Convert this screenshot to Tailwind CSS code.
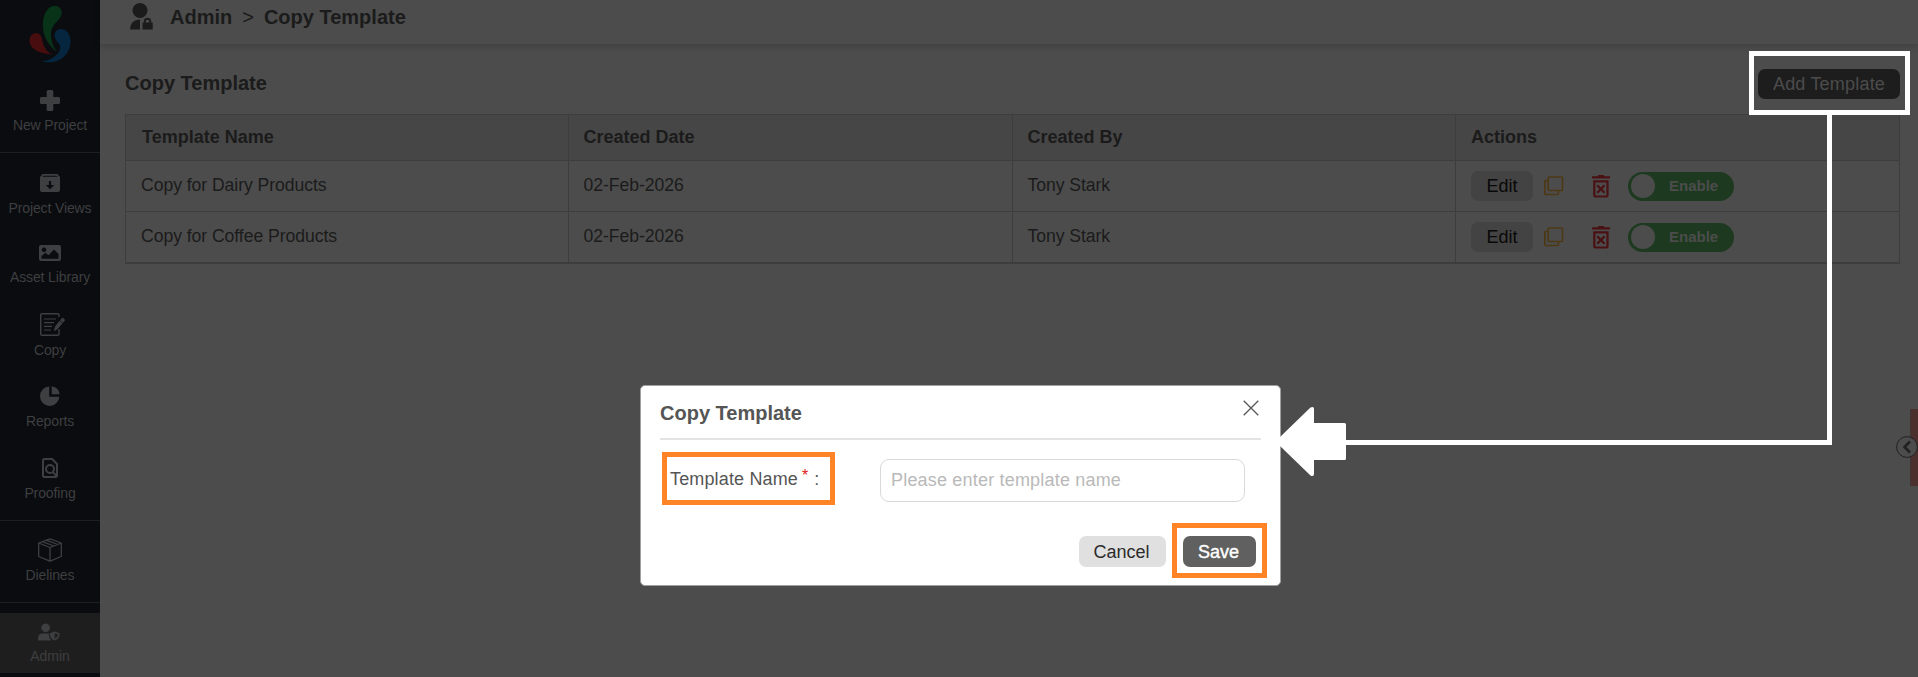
<!DOCTYPE html>
<html lang="en">
<head>
<meta charset="utf-8">
<title>Copy Template</title>
<script src="https://cdn.jsdelivr.net/npm/@tailwindcss/browser@4"></script>
</head>
<body class="relative flex h-[677px] w-[1918px] overflow-hidden bg-[#4c4c4c] font-['Liberation_Sans',Arial,sans-serif] text-[#1b1b1b]">
<svg class="hidden">
  <symbol id="copy" viewBox="0 0 20 20"><path d="M5.2 1h12.3q1 0 1 1v11.500q0 1-1 1H5.200q-1 0-1-1V2q0-1 1-1zM4 4.500H1.500q-.7 0-.7.7V17.500q0 1 1 1H13.500q1 0 1-1V15" fill="none" stroke="#4d3814" stroke-width="1.600"/></symbol>
  <symbol id="trash" viewBox="0 0 18 23"><path d="M0 1.200h5.500L6.500 0h5l1 1.200H18v2.300H0zM1.200 5.200h15.400v15.300q0 2-2 2H3.200q-2 0-2-2zm2.200 2.200v13h11v-13z" fill="#4a1012" fill-rule="evenodd"/><path d="M5.300 10.200l7.200 7.600M12.500 10.200l-7.200 7.600" stroke="#4a1012" stroke-width="2.200"/></symbol>
</svg>

<nav class="flex w-[100px] shrink-0 flex-col bg-[#0a0c0f] text-center text-sm leading-4 tracking-[-0.12px] text-[#3e3f40]">
  <div class="flex h-[153px] shrink-0 flex-col items-center border-b border-[#1d1f21]">
    <svg class="mt-[5px] h-[59px] w-[42px]" viewBox="29.500 5 42 59">
      <path d="M57.500 52C49 45.500 43.300 36 43.300 25C43.300 13 49 5.700 55.500 5.700C60 5.700 62.800 9.500 62.200 14C61 20.500 52 23.500 51.500 33C51.300 41 54 47 57.500 52Z" fill="#083318"/>
      <path d="M53 54.500C41 54 30 49.500 30 40.500C30 36 33 33 36.500 33C41 33 42.200 37 43 41C44.300 47 47.500 52.500 53 54.500Z" fill="#470d0f"/>
      <path d="M42.300 61.700C51 60.500 59 55.500 60.800 48.500C61.500 43.500 55 41 55 35.500C55 31.500 58 29 61.500 29C67 29 71 34 71 41C71 55 60 65 42.300 61.700Z" fill="#06263f"/>
    </svg>
    <svg class="mt-[26px] h-[21px] w-5 shrink-0" viewBox="0 0 21 21" preserveAspectRatio="none" fill="#3e3f40"><path d="M7 1.500Q7 0 8.500 0h4Q14 0 14 1.500V7h5.500Q21 7 21 8.500v4q0 1.500-1.500 1.500H14v5.500q0 1.500-1.500 1.500h-4Q7 21 7 19.500V14H1.500Q0 14 0 12.500v-4Q0 7 1.500 7H7z"/></svg>
    <span class="mt-[6px]">New Project</span>
  </div>
  <div class="flex h-[83px] shrink-0 flex-col items-center">
    <svg class="mt-[21px] h-[18px] w-5" viewBox="0 0 20 18"><path d="M2.500 0h15L20 3v13q0 2-2 2H2q-2 0-2-2V3zM2.300 2.800h15.400L16.500 1.700h-13zM8.900 7v4H5.800L10 15.200 14.200 11H11.100V7z" fill="#3e3f40" fill-rule="evenodd"/></svg>
    <span class="mt-[8px]">Project Views</span>
  </div>
  <div class="flex h-[70px] shrink-0 flex-col items-center">
    <svg class="mt-[9px] h-4 w-[22px]" viewBox="0 0 22 16"><path d="M2 0h18q2 0 2 2v12q0 2-2 2H2q-2 0-2-2V2q0-2 2-2zM5 2.500a2.300 2.300 0 1 0 .01 0zM2.500 13.700h17V9L15 4.500 9.500 10.200 6.500 7.700 2.500 11z" fill="#3e3f40" fill-rule="evenodd"/></svg>
    <span class="mt-[8px]">Asset Library</span>
  </div>
  <div class="flex h-[73px] shrink-0 flex-col items-center">
    <svg class="ml-[5px] mt-[7px] h-[23px] w-[25px]" viewBox="0 0 25 23" fill="none" stroke="#3e3f40"><path d="M19 4V2q0-1.300-1.300-1.300H2Q.7.700.7 2v19q0 1.300 1.300 1.300h15.700q1.300 0 1.300-1.300v-5" stroke-width="1.400"/><path d="M4 6h12M4 9.700h10M4 13.300h8M4 17h7" stroke-width="1.200"/><path d="M14.500 17.500l1-4 7-8.500 2.200 1.900-7 8.500z" stroke-width="1" fill="#3e3f40"/><path d="M19.700 7.400l2.800 2.400" stroke="#0a0c0f" stroke-width=".8"/></svg>
    <span class="mt-[6px]">Copy</span>
  </div>
  <div class="flex h-[72px] shrink-0 flex-col items-center">
    <svg class="mt-[7px] h-5 w-5" viewBox="0 0 20 20" fill="#3e3f40"><path d="M9.200.5v10.300h10.200A9.700 9.700 0 1 1 9.200.5zM11.700.2q7 1 8 8h-8z"/></svg>
    <span class="mt-[7px]">Reports</span>
  </div>
  <div class="flex h-[70px] shrink-0 flex-col items-center border-b border-[#1d1f21]">
    <svg class="mt-[7px] h-5 w-4" viewBox="0 0 16 20" fill="none" stroke="#3e3f40" stroke-width="2"><path d="M2.200 1h8l4.800 5v11.800q0 1.200-1.200 1.200H2.200Q1 19 1 17.800V2.200Q1 1 2.200 1z"/><circle cx="8" cy="11" r="4"/><path d="M10.800 14l3.700 4"/></svg>
    <span class="mt-[7px]">Proofing</span>
  </div>
  <div class="flex h-[82px] shrink-0 flex-col items-center border-b border-[#1d1f21]">
    <svg class="mt-[17px] h-6 w-6" viewBox="0 0 24 24" fill="none" stroke="#3e3f40" stroke-width="1.300" stroke-linejoin="round"><path d="M12 .8L23.300 5v13.500L12 23.200.7 18.500V5zM.7 5L12 9.500 23.300 5M12 9.500v13.700M4.300 3.600L16 8M8 2.200L19.800 6.500"/></svg>
    <span class="mt-[5px]">Dielines</span>
  </div>
  <div class="mt-[10px] flex h-[60px] shrink-0 flex-col items-center bg-[#1e1e1e]">
    <svg class="ml-[-2px] mt-[10px] h-[18px] w-[22px]" viewBox="0 0 23 18" fill="#3e3f40"><circle cx="8" cy="4.500" r="4.500"/><path d="M0 18v-2.500Q0 10.500 5 10.500h6.500q-.5 4.500 2.500 7.500zM17.500 8.500l5 1.700q.7 5.300-5 7.800-5.700-2.500-5-7.800zm0 1.800v5.800q3.600-2 3.400-4.800z" fill-rule="evenodd"/></svg>
    <span class="mt-[7px] tracking-normal">Admin</span>
  </div>
</nav>

<div class="flex grow flex-col">
  <header class="flex h-[44px] shrink-0 items-start shadow-[0_2px_7px_rgba(0,0,0,0.18)]">
    <svg class="ml-[30px] mt-[3px] h-[27px] w-[23px]" viewBox="0 0 23 27" fill="#1b1b1b"><circle cx="10" cy="7.500" r="7.500"/><path d="M0 26.500Q0 17 10 16.500V26.500zM12.500 19.500h1.300v-.7q0-4 3.700-4t3.700 4v.7h1.500v7H12.500zm3.200 0h3.600v-.7q0-2-1.800-2t-1.800 2z" fill-rule="evenodd"/></svg>
    <div class="ml-[17px] mt-[5px] flex text-xl leading-6 font-bold"><span>Admin</span><span class="ml-[10px] font-normal">&gt;</span><span class="ml-[10px]">Copy Template</span></div>
  </header>
  <main class="mr-[18px] ml-[25px]">
    <div class="flex h-[70px] justify-between">
      <h1 class="mt-[27px] text-xl leading-6 font-bold">Copy Template</h1>
      <button class="mt-[25px] h-[30px] w-[142px] rounded-[7px] bg-[#1d1d1d] text-lg leading-[29px] tracking-[0.2px] text-[#4c4c4c]">Add Template</button>
    </div>
    <table class="w-full table-fixed border-separate border-spacing-0 border-t border-l border-b border-[#3d3d3d] text-left text-[17.600px] tracking-[-0.050px]">
      <colgroup><col class="w-[443px]"><col class="w-[444px]"><col class="w-[443px]"><col class="w-[444px]"></colgroup>
      <thead class="bg-[#464646] text-lg tracking-normal">
        <tr class="h-[46px]">
          <th class="border-r border-b border-[#3d3d3d] p-0 pb-[2px] pl-4">Template Name</th>
          <th class="border-r border-b border-[#3d3d3d] p-0 pb-[2px] pl-[14.500px]">Created Date</th>
          <th class="border-r border-b border-[#3d3d3d] p-0 pb-[2px] pl-[14.500px]">Created By</th>
          <th class="border-r border-b border-[#3d3d3d] p-0 pb-[2px] pl-[15px]">Actions</th>
        </tr>
      </thead>
      <tbody>
        <tr class="h-[51px]">
          <td class="border-r border-b border-[#3d3d3d] p-0 pb-[2px] pl-[15px]">Copy for Dairy Products</td>
          <td class="border-r border-b border-[#3d3d3d] p-0 pb-[2px] pl-[14.500px]">02-Feb-2026</td>
          <td class="border-r border-b border-[#3d3d3d] p-0 pb-[2px] pl-[14.500px]">Tony Stark</td>
          <td class="border-r border-b border-[#3d3d3d] p-0 pl-[15px]">
            <div class="flex items-center tracking-normal">
              <button class="h-[30px] w-[62px] rounded-[7px] bg-[#434343] text-lg leading-[29px] text-[#080808]">Edit</button>
              <svg class="ml-[11px] h-5 w-5"><use href="#copy"/></svg>
              <svg class="ml-[28px] h-[23px] w-[18px]"><use href="#trash"/></svg>
              <div class="ml-[18px] flex h-[29px] w-[106px] items-center rounded-full bg-[#1d3a20] pl-[3px]"><i class="h-6 w-6 rounded-full bg-[#4c4c4c]"></i><b class="ml-[14px] text-[15px] leading-5 text-[#4c4c4c]">Enable</b></div>
            </div>
          </td>
        </tr>
        <tr class="h-[51px]">
          <td class="border-r border-b border-[#3d3d3d] p-0 pb-[2px] pl-[15px]">Copy for Coffee Products</td>
          <td class="border-r border-b border-[#3d3d3d] p-0 pb-[2px] pl-[14.500px]">02-Feb-2026</td>
          <td class="border-r border-b border-[#3d3d3d] p-0 pb-[2px] pl-[14.500px]">Tony Stark</td>
          <td class="border-r border-b border-[#3d3d3d] p-0 pl-[15px]">
            <div class="flex items-center tracking-normal">
              <button class="h-[30px] w-[62px] rounded-[7px] bg-[#434343] text-lg leading-[29px] text-[#080808]">Edit</button>
              <svg class="ml-[11px] h-5 w-5"><use href="#copy"/></svg>
              <svg class="ml-[28px] h-[23px] w-[18px]"><use href="#trash"/></svg>
              <div class="ml-[18px] flex h-[29px] w-[106px] items-center rounded-full bg-[#1d3a20] pl-[3px]"><i class="h-6 w-6 rounded-full bg-[#4c4c4c]"></i><b class="ml-[14px] text-[15px] leading-5 text-[#4c4c4c]">Enable</b></div>
            </div>
          </td>
        </tr>
      </tbody>
    </table>
  </main>
</div>

<!-- Collapsed side drawer handle -->
<div class="absolute top-[409px] left-[1910px] h-[77px] w-2 border-l border-[#403634] bg-[#4c302d]"></div>
<svg class="absolute top-[436px] left-[1896px] h-[22px] w-[22px]" viewBox="0 0 22 22" fill="none"><circle cx="11" cy="11" r="10.400" fill="#4c4c4c" stroke="#222" stroke-width="1"/><path d="M14 5.500L8.500 11l5.500 5.500" stroke="#222" stroke-width="2.600"/></svg>

<!-- Dialog -->
<section class="absolute top-[385px] left-[640px] flex h-[201px] w-[640.500px] flex-col rounded-[5px] border border-[#a0a0a0] bg-white px-[19px] text-[#555]">
  <div class="flex h-[54px] shrink-0 justify-between border-b-2 border-[#e3e3e3]">
    <h2 class="mt-[15px] text-xl leading-6 font-bold">Copy Template</h2>
    <svg class="mt-[14px] mr-[2px] h-4 w-4" viewBox="0 0 16 16" stroke="#555" stroke-width="1.300"><path d="M.7.700l14.600 14.600M15.300.700L.7 15.300"/></svg>
  </div>
  <div class="mt-[12px] flex h-[54px] shrink-0 items-start text-lg">
    <div class="ml-[2px] flex h-[53px] w-[173px] items-center border-5 border-[#ff8426] pl-[3px]"><span class="tracking-[0.150px]">Template Name</span><span class="mb-[6px] ml-[4px] text-base text-[#e02020]">*</span><span class="ml-[6px]">:</span></div>
    <input class="mt-[7px] ml-[45px] h-[43px] w-[365px] rounded-[9px] border border-[#d9d9d9] px-[10px] text-lg tracking-[0.190px] placeholder:text-[#b9b9b9]" placeholder="Please enter template name">
  </div>
  <div class="mr-[-6.500px] mt-[17px] flex items-center justify-end text-lg">
    <button class="mt-[2px] mr-[6px] h-[31px] w-[87px] rounded-[7px] bg-[#e0e0e0] pr-[2px] leading-[30px] text-[#2b2b2b]">Cancel</button>
    <div class="flex h-[55px] w-[95px] items-center border-5 border-[#ff8426] pt-[2px] pl-[6px]"><button class="h-[31px] w-[73px] rounded-[7px] bg-[#606060] pr-[2px] leading-[30px] text-white [-webkit-text-stroke:0.400px_white]">Save</button></div>
  </div>
</section>

<!-- Callout from the button to the dialog -->
<svg class="absolute inset-0 h-[677px] w-[1918px]" viewBox="0 0 1918 677" fill="none" stroke="#fff" stroke-width="5"><path d="M1751.500 53.500h156v59h-156zM1829.500 115v327.500H1340"/><path d="M1280 437L1310.500 407.500Q1314 406 1314 409V423h30.500q1.500 0 1.500 1.500v34q0 1.500-1.500 1.500H1314v14q0 3-3.500 1.500L1280 446z" fill="#fff" stroke="none"/></svg>
</body>
</html>
